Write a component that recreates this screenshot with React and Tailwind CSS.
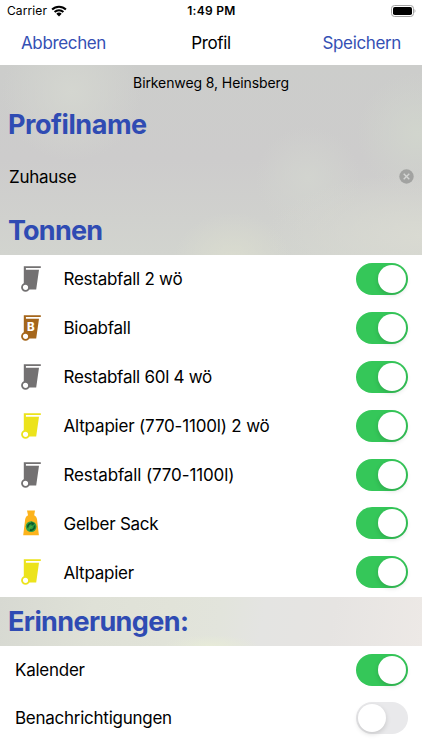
import { useState } from "react";

const BINS = [
  { id: 1, name: "Restabfall 2 wö", icon: "bin", color: "#737172" },
  { id: 2, name: "Bioabfall", icon: "bin", color: "#a5661b", letter: "B" },
  { id: 3, name: "Restabfall 60l 4 wö", icon: "bin", color: "#737172" },
  {
    id: 4,
    name: "Altpapier (770-1100l) 2 wö",
    icon: "bin",
    color: "#ece31c",
    tracking: "tracking-[-0.18px]",
  },
  {
    id: 5,
    name: "Restabfall (770-1100l)",
    icon: "bin",
    color: "#737172",
    tracking: "tracking-[-0.12px]",
  },
  { id: 6, name: "Gelber Sack", icon: "sack" },
  { id: 7, name: "Altpapier", icon: "bin", color: "#ece31c" },
];

function BinIcon({ color, letter }) {
  return (
    <svg width="20" height="26" viewBox="0 0 20 26" className="shrink-0">
      <path d="M2.8 0.3H19.8V2H4.9V3.7H18L15.2 23.4H2.8Z" fill={color} />
      <circle cx="4.5" cy="21.3" r="3.5" fill="white" stroke={color} strokeWidth="1.8" />
      {letter && (
        <text
          x="9.8"
          y="16.3"
          textAnchor="middle"
          fontSize="11.5"
          fontWeight="800"
          fontFamily="Inter, sans-serif"
          fill="white"
        >
          {letter}
        </text>
      )}
    </svg>
  );
}

function SackIcon() {
  return (
    <svg width="20" height="26" viewBox="0 0 20 26" className="shrink-0">
      <path
        d="M6 .4H14L13.2 5.2Q15.6 6.4 16 9L17.9 25.3H2.2L4.2 9Q4.6 6.4 7 5.2Z"
        fill="#fcb31c"
      />
      <circle cx="10.1" cy="16.6" r="5.4" fill="#2fa043" />
      <path
        d="M6.8 17.6A3.5 3.5 0 0 1 10.6 13.5M13.4 15.4A3.6 3.6 0 0 1 9 19.9"
        fill="none"
        stroke="#0d5a2a"
        strokeWidth="1.7"
      />
      <path d="M10.2 11.6L13.8 13.7L10.6 15.9Z" fill="#0d5a2a" />
      <path d="M8 18.2L11 16" stroke="#55a93a" strokeWidth="1.2" />
    </svg>
  );
}

/** iOS style switch */
function Toggle({ label, defaultOn = true }) {
  const [on, setOn] = useState(defaultOn);

  return (
    <button
      type="button"
      role="switch"
      aria-checked={on}
      aria-label={label}
      onClick={() => setOn(!on)}
      className={`flex h-8 w-[52px] shrink-0 items-center rounded-full p-[2px] ${
        on ? "justify-end bg-[#35c759]" : "justify-start bg-[#e9e9eb]"
      }`}
    >
      <span className="size-7 rounded-full bg-white shadow-[0_2px_5px_rgba(0,0,0,0.15)]" />
    </button>
  );
}

function StatusBar() {
  return (
    <div className="grid h-[22px] grid-cols-3 items-center pr-[6px] pl-[7px]">
      <div className="flex items-center gap-[4px]">
        <span className="text-[12px] tracking-[0.1px]">Carrier</span>
        <svg width="16" height="12" viewBox="0 0 16 12">
          <path
            d="M1.1 4.5A9.8 9.8 0 0 1 14.9 4.5M3.6 7A6.3 6.3 0 0 1 12.4 7"
            fill="none"
            stroke="black"
            strokeWidth="2"
          />
          <path d="M5.3 8.7A4 4 0 0 1 10.7 8.7L8 11.4Z" fill="black" />
        </svg>
      </div>
      <span className="text-center text-[12px] font-semibold tracking-[0.3px]">
        1:49 PM
      </span>
      <svg width="25" height="12" viewBox="0 0 25 12" className="justify-self-end">
        <rect x=".5" y=".5" width="22" height="11" rx="3" fill="none" stroke="#a3a3a3" />
        <rect x="2" y="2" width="19" height="8" rx="1.8" fill="black" />
        <path d="M23.6 4Q25.2 6 23.6 8Z" fill="#8e8e8e" />
      </svg>
    </div>
  );
}

function SectionTitle({ children, tracking = "tracking-[-0.6px]" }) {
  return (
    <h2 className={`px-[8px] text-[27px] font-bold text-[#2f4bb3] ${tracking}`}>
      {children}
    </h2>
  );
}

function App() {
  return (
    <div className="flex h-[750px] w-full flex-col overflow-hidden bg-white font-['Inter',sans-serif] text-[17px] tracking-[-0.26px] text-black">
      <StatusBar />
      <header className="grid h-[43px] shrink-0 grid-cols-3 items-center px-[21px] pt-px tracking-[-0.36px]">
        <button type="button" className="text-left text-[#3550b4]">
          Abbrechen
        </button>
        <h1 className="text-center font-normal">Profil</h1>
        <button type="button" className="text-right text-[#3550b4]">
          Speichern
        </button>
      </header>

      <section className="h-[189.5px] shrink-0 bg-[#cecfcd] bg-[radial-gradient(circle_at_17%_14%,#d4d6d0_0,transparent_18%),radial-gradient(ellipse_at_55%_104%,#dadccf_0,transparent_18%),radial-gradient(ellipse_at_100%_90%,#d9dad2_0,transparent_26%),radial-gradient(circle_at_99%_36%,#d1d5cd_0,transparent_14%),radial-gradient(circle_at_73%_60%,#d2d4cf_0,transparent_16%),linear-gradient(to_bottom,#cccdcb,#cdcccc_50%,#d2d4cf)]">
        <p className="flex h-[35px] items-center justify-center text-[14px] tracking-[-0.1px]">
          Birkenweg 8, Heinsberg
        </p>
        <div className="flex h-[50px] items-center">
          <SectionTitle tracking="tracking-[-0.45px]">Profilname</SectionTitle>
        </div>
        <div className="flex h-[53px] items-center justify-between pr-2 pl-[9px]">
          <span className="pt-[2px]">Zuhause</span>
          <svg width="15" height="15" viewBox="0 0 15 15">
            <circle cx="7.5" cy="7.5" r="7.2" fill="#a2a3a1" />
            <path d="M4.7 4.7L10.3 10.3M10.3 4.7L4.7 10.3" stroke="#d4d5d3" strokeWidth="1.4" />
          </svg>
        </div>
        <div className="flex h-[55px] items-center pt-[2px]">
          <SectionTitle tracking="tracking-[-0.8px]">Tonnen</SectionTitle>
        </div>
      </section>

      <ul className="shrink-0">
        {BINS.map((bin) => (
          <li key={bin.id} className="flex h-[48.9px] items-center pr-[14.5px] pl-[21px]">
            {bin.icon === "sack" ? (
              <SackIcon />
            ) : (
              <BinIcon color={bin.color} letter={bin.letter} />
            )}
            <span className={`ml-[22.5px] flex-1 pt-[2px] ${bin.tracking ?? ""}`}>
              {bin.name}
            </span>
            <Toggle label={bin.name} />
          </li>
        ))}
      </ul>

      <div className="flex h-[49px] shrink-0 items-center bg-[radial-gradient(ellipse_at_50%_100%,#e7ebd8_0,transparent_16%),linear-gradient(100deg,#d7d9d2,#dfe1d7_22%,#e1e3d9_40%,#e2e4dc_52%,#e4e4e2_62%,#e6e4e2_78%,#ede9e6)] pt-[3px]">
        <SectionTitle>Erinnerungen:</SectionTitle>
      </div>
      <div className="flex h-[48px] shrink-0 items-center justify-between pr-[14.5px] pl-[15px]">
        <span className="pt-[2px]">Kalender</span>
        <Toggle label="Kalender" />
      </div>
      <div className="flex h-[48px] shrink-0 items-center justify-between pr-[14.5px] pl-[15px]">
        <span className="pt-[2px]">Benachrichtigungen</span>
        <Toggle label="Benachrichtigungen" defaultOn={false} />
      </div>
    </div>
  );
}

export default App;
